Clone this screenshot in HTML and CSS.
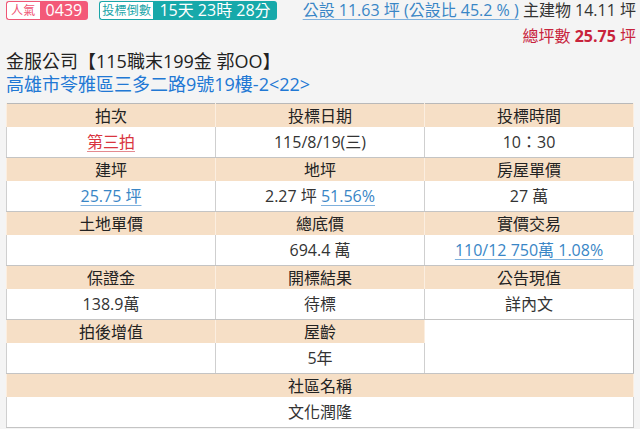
FILE: index.html
```html
<!DOCTYPE html>
<html lang="zh-Hant">
<head>
<meta charset="utf-8">
<link rel="stylesheet" href="styles.css">
</head>
<body>
<div class="page">
  <div class="top">
    <div class="badges">
      <span class="badge pink"><span class="lbl">人氣</span><span class="val">0439</span></span>
      <span class="badge teal"><span class="lbl">投標倒數</span><span class="val">15天 23時 28分</span></span>
    </div>
    <div class="area">
      <a class="link" href="#">公設 11.63 坪 (公設比 45.2 % )</a> 主建物 14.11 坪
    </div>
  </div>
  <div class="total">總坪數 <b>25.75</b> 坪</div>
  <div class="title">金服公司【115職末199金 郭OO】</div>
  <div class="addr">高雄市苓雅區三多二路9號19樓-2&lt;22&gt;</div>
  <table class="info">
    <tr class="hd"><th>拍次</th><th>投標日期</th><th>投標時間</th></tr>
    <tr class="dt"><td><a class="red" href="#">第三拍</a></td><td>115/8/19(三)</td><td>10：30</td></tr>
    <tr class="hd"><th>建坪</th><th>地坪</th><th>房屋單價</th></tr>
    <tr class="dt"><td><a class="link" href="#">25.75 坪</a></td><td>2.27 坪 <a class="link" href="#">51.56%</a></td><td>27 萬</td></tr>
    <tr class="hd"><th>土地單價</th><th>總底價</th><th>實價交易</th></tr>
    <tr class="dt"><td></td><td>694.4 萬</td><td><a class="link" href="#">110/12 750萬 1.08%</a></td></tr>
    <tr class="hd"><th>保證金</th><th>開標結果</th><th>公告現值</th></tr>
    <tr class="dt"><td>138.9萬</td><td>待標</td><td>詳內文</td></tr>
    <tr class="hd"><th>拍後增值</th><th>屋齡</th><td class="blank" rowspan="2"></td></tr>
    <tr class="dt"><td></td><td>5年</td></tr>
    <tr class="hd"><th colspan="3">社區名稱</th></tr>
    <tr class="dt"><td colspan="3">文化潤隆</td></tr>
  </table>
</div>
</body>
</html>
```
FILE: styles.css
```css
html, body {
  margin: 0;
  padding: 0;
  background: #f4f4f4;
}
body {
  font-family: "Open Sans", "Noto Sans CJK TC", sans-serif;
  color: #333;
}
.page {
  padding: 0 6px;
}
.top {
  display: flex;
  justify-content: space-between;
  align-items: flex-start;
  height: 22px;
  margin-right: -2px;
}
.badges {
  display: flex;
  gap: 11px;
  padding-top: 1px;
}
.badge {
  display: flex;
  height: 19px;
  line-height: 19px;
}
.badge .lbl {
  font-size: 12px;
  background: #fff;
  padding: 0 3px;
  border: 1px solid;
  border-right: none;
  border-radius: 3px 0 0 3px;
  height: 17px;
  line-height: 17px;
  letter-spacing: 0.3px;
}
.badge .val {
  color: #fff;
  padding: 0 6px;
  border-radius: 0 3px 3px 0;
}
.pink .lbl { color: #ef5675; border-color: #ef5675; padding: 0 4px; }
.pink .val { background: #f35a78; font-size: 16px; padding: 0 6px; }
.teal .lbl { color: #1aa5a8; border-color: #1aa5a8; padding: 0 2px; }
.teal .val { background: #17a9aa; font-size: 16px; padding: 0 6px; }
.area {
  font-size: 16px;
  height: 22px;
  line-height: 20px;
  color: #333;
}
.link {
  color: #3986c6;
  text-decoration: underline;
  text-decoration-color: #7fb1dd;
  text-underline-offset: 3px;
}
.red {
  color: #d9353f;
  text-decoration: underline;
  text-decoration-color: #e48a90;
  text-underline-offset: 3px;
}
.total {
  text-align: right;
  color: #c8233c;
  font-size: 16px;
  line-height: 28px;
  height: 27px;
  margin-right: -2px;
  overflow: hidden;
}
.total b {
  font-weight: 700;
}
.title {
  font-size: 18px;
  line-height: 24px;
  height: 23px;
  color: #222;
}
.addr {
  font-size: 18px;
  line-height: 24px;
  height: 24px;
  color: #2178d4;
}
.info {
  margin-top: 7px;
  width: 628px;
  border-collapse: collapse;
  table-layout: fixed;
  border: 1px solid #b9b9b9;
  font-size: 16px;
}
.info th, .info td {
  text-align: center;
  padding: 0;
  font-weight: normal;
  line-height: 20px;
}
.hd th {
  background: #f6dfc6;
  height: 23px;
  border-left: 1px solid #fbeee0;
  border-right: 1px solid #fbeee0;
  color: #222;
}
.dt td {
  background: #fff;
  height: 30px;
  border-left: 1px solid #cfcfcf;
  border-right: 1px solid #cfcfcf;
  border-bottom: 1px solid #c4c4c4;
}
.info td.blank {
  background: #fff;
  border-left: 1px solid #cfcfcf;
  border-bottom: 1px solid #c4c4c4;
}
```
